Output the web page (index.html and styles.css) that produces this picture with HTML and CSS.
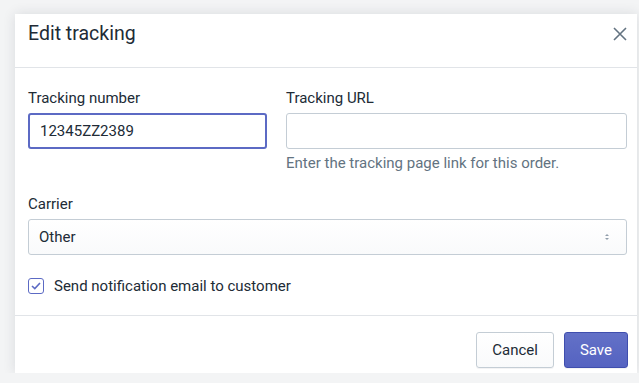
FILE: index.html
```html
<!DOCTYPE html>
<html>
<head>
  <title>Edit tracking</title>
  <link rel="stylesheet" href="styles.css">
</head>
<body>
  <div class="modal">
    <div class="modal-header">
      <h2 class="modal-title">Edit tracking</h2>
      <button class="close-button" aria-label="Close">
        <svg width="14" height="14" viewBox="0 0 14 14">
          <path d="M1 1L13 13M13 1L1 13" stroke="#637381" stroke-width="1.6" fill="none"/>
        </svg>
      </button>
    </div>

    <div class="modal-body">
      <div class="field-row">
        <div class="field">
          <label class="field-label" for="tracking-number">Tracking number</label>
          <input id="tracking-number" class="text-input focused" type="text" value="12345ZZ2389">
        </div>
        <div class="field">
          <label class="field-label" for="tracking-url">Tracking URL</label>
          <input id="tracking-url" class="text-input" type="text">
          <p class="help-text">Enter the tracking page link for this order.</p>
        </div>
      </div>

      <div class="field carrier-field">
        <label class="field-label" for="carrier">Carrier</label>
        <div class="select-wrap">
          <select id="carrier" class="select-input">
            <option>Other</option>
          </select>
          <svg class="select-arrows" width="8" height="12" viewBox="0 0 8 12">
            <path d="M2 5L4 3L6 5Z" fill="#919eab"/>
            <path d="M2 7L4 9L6 7Z" fill="#919eab"/>
          </svg>
        </div>
      </div>

      <label class="checkbox-row">
        <span class="checkbox">
          <svg width="10" height="8" viewBox="0 0 10 8">
            <path d="M1 4L3.8 6.6L9 1" stroke="#5c6ac4" stroke-width="1.6" fill="none"/>
          </svg>
        </span>
        <span>Send notification email to customer</span>
      </label>
    </div>

    <div class="modal-footer">
      <button class="btn">Cancel</button>
      <button class="btn btn-primary">Save</button>
    </div>
  </div>
</body>
</html>
```

FILE: styles.css
```css
body {
  margin: 0;
  background: #f3f4f5;
  font-family: Roboto, "Liberation Sans", sans-serif;
  color: #212b36;
}

.modal {
  margin: 14px 0 0 15px;
  width: 622px;
  background: #fff;
  box-shadow: 0 0 12px rgba(33, 43, 54, 0.12);
}

.modal-header {
  height: 54px;
  box-sizing: border-box;
  padding: 8px 10px 0 13px;
  border-bottom: 1px solid #e1e4e8;
  display: flex;
  justify-content: space-between;
  align-items: flex-start;
}

.modal-title {
  margin: 0;
  font-size: 19.5px;
  font-weight: 400;
  line-height: 24px;
}

.close-button {
  border: none;
  background: none;
  padding: 0;
  margin: 5px 0 0 0;
  width: 14px;
  height: 14px;
  display: flex;
}

.modal-body {
  padding: 20px 10px 19px 13px;
  border-bottom: 1px solid #e1e4e8;
}

.field-row {
  display: grid;
  grid-template-columns: 239px 1fr;
  gap: 19px;
}

.field-label {
  display: block;
  font-size: 15px;
  line-height: 20px;
  margin-bottom: 5px;
}

.text-input {
  display: block;
  box-sizing: border-box;
  width: 100%;
  height: 36px;
  border: 1px solid #c4cdd5;
  border-radius: 3px;
  padding: 0 11px;
  font: 15px Roboto, "Liberation Sans", sans-serif;
  color: #212b36;
  outline: none;
}

.text-input.focused {
  border: 2px solid #5c6ac4;
  padding: 0 10px;
}

.help-text {
  margin: 4px 0 0;
  font-size: 15px;
  line-height: 20px;
  color: #637381;
}

.carrier-field {
  margin-top: 21px;
}

.select-wrap {
  position: relative;
}

.select-input {
  display: block;
  width: 100%;
  height: 36px;
  box-sizing: border-box;
  appearance: none;
  -webkit-appearance: none;
  border: 1px solid #c4cdd5;
  border-radius: 3px;
  background: linear-gradient(#fff, #f9fafb);
  padding: 0 10px;
  font: 15px Roboto, "Liberation Sans", sans-serif;
  color: #212b36;
}

.select-arrows {
  position: absolute;
  right: 16px;
  top: 12px;
}

.checkbox-row {
  margin-top: 21px;
  display: flex;
  align-items: center;
  gap: 10px;
  font-size: 15px;
  line-height: 20px;
}

.checkbox {
  width: 16px;
  height: 16px;
  box-sizing: border-box;
  border: 1px solid #5c6ac4;
  border-radius: 3px;
  display: flex;
  align-items: center;
  justify-content: center;
}

.modal-footer {
  padding: 16px 9px 5px 0;
  display: flex;
  justify-content: flex-end;
  gap: 10px;
}

.btn {
  height: 36px;
  padding: 0 15px;
  border: 1px solid #c4cdd5;
  border-radius: 3px;
  background: linear-gradient(#fff, #f9fafb);
  font: 15px Roboto, "Liberation Sans", sans-serif;
  color: #212b36;
  box-shadow: 0 1px 0 rgba(22, 29, 37, 0.05);
}

.btn-primary {
  background: linear-gradient(#6371c7, #5563c1);
  border-color: #3f4eae;
  color: #fff;
}
```
